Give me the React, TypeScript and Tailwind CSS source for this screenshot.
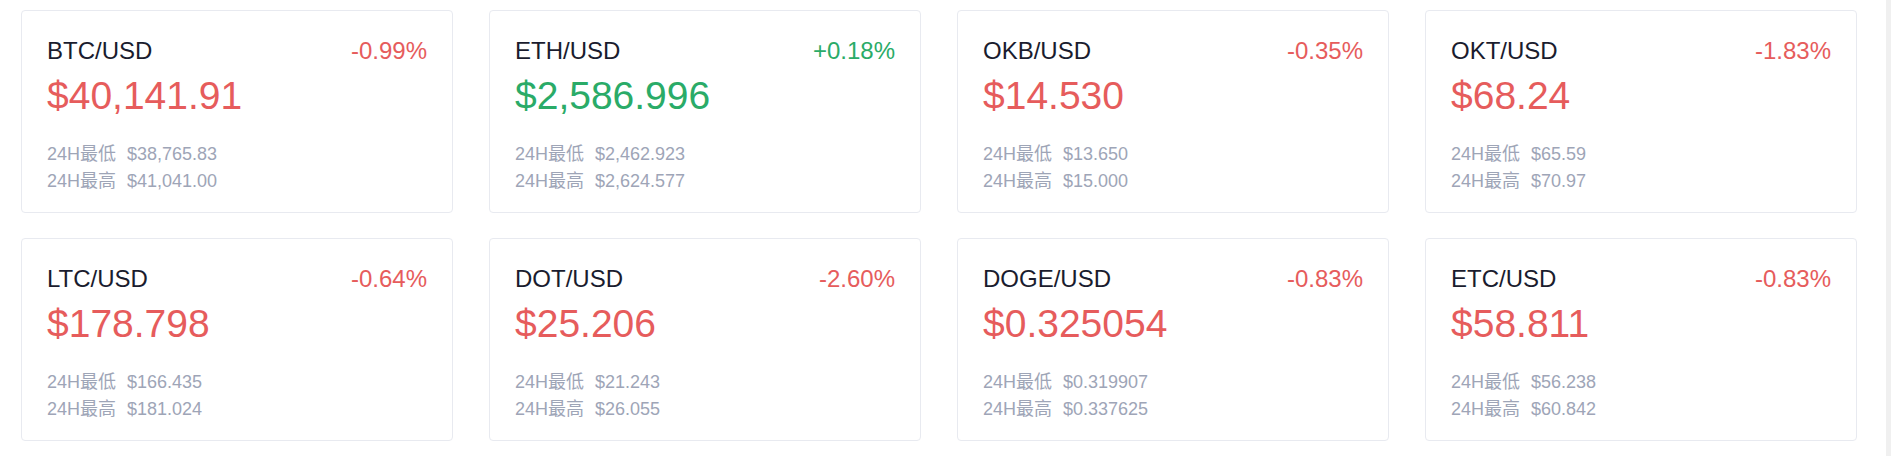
import * as React from 'react';

// ---------------------------------------------------------------------------
// Data
// ---------------------------------------------------------------------------

interface Ticker {
  pair: string;
  change: string;
  price: string;
  low: string;
  high: string;
  up: boolean;
}

const TICKERS: Ticker[] = [
  { pair: 'BTC/USD', change: '-0.99%', price: '$40,141.91', low: '$38,765.83', high: '$41,041.00', up: false },
  { pair: 'ETH/USD', change: '+0.18%', price: '$2,586.996', low: '$2,462.923', high: '$2,624.577', up: true },
  { pair: 'OKB/USD', change: '-0.35%', price: '$14.530', low: '$13.650', high: '$15.000', up: false },
  { pair: 'OKT/USD', change: '-1.83%', price: '$68.24', low: '$65.59', high: '$70.97', up: false },
  { pair: 'LTC/USD', change: '-0.64%', price: '$178.798', low: '$166.435', high: '$181.024', up: false },
  { pair: 'DOT/USD', change: '-2.60%', price: '$25.206', low: '$21.243', high: '$26.055', up: false },
  { pair: 'DOGE/USD', change: '-0.83%', price: '$0.325054', low: '$0.319907', high: '$0.337625', up: false },
  { pair: 'ETC/USD', change: '-0.83%', price: '$58.811', low: '$56.238', high: '$60.842', up: false },
];

// ---------------------------------------------------------------------------
// TickerCard
// ---------------------------------------------------------------------------

function TickerCard({ t }: { t: Ticker }) {
  const tone = t.up ? 'text-[#2aab68]' : 'text-[#e65c5c]';
  return (
    <div className="rounded-[4px] border border-[#e8eaf0] bg-white pl-[25px] pr-[25px] pt-[27px] pb-[17px]">
      <div className="flex items-center justify-between text-[24px] leading-[26px]">
        <span className="text-[#1a1c2e]">{t.pair}</span>
        <span className={tone}>{t.change}</span>
      </div>
      <div className={`mt-[12px] text-[39px] leading-[40px] ${tone}`}>{t.price}</div>
      <div className="mt-[25px] text-[18px] leading-[27px] text-[#9ea5b7]">
        <div className="flex">
          <span>24H最低</span>
          <span className="ml-[11px]">{t.low}</span>
        </div>
        <div className="flex">
          <span>24H最高</span>
          <span className="ml-[11px]">{t.high}</span>
        </div>
      </div>
    </div>
  );
}

// ---------------------------------------------------------------------------
// App
// ---------------------------------------------------------------------------

export default function App() {
  return (
    <div
      className="flex h-[456px] w-full bg-white"
      style={{ fontFamily: '"Liberation Sans", Arial, "Noto Sans CJK SC", sans-serif' }}
    >
      <div className="flex-1 pl-[21px] pr-[29px] pt-[10px]">
        <div className="grid grid-cols-4 gap-x-[36px] gap-y-[25px]">
          {TICKERS.map((t) => (
            <TickerCard key={t.pair} t={t} />
          ))}
        </div>
      </div>
      {/* scrollbar strip */}
      <div className="w-[5px] bg-[#f0f0f0]" />
    </div>
  );
}
